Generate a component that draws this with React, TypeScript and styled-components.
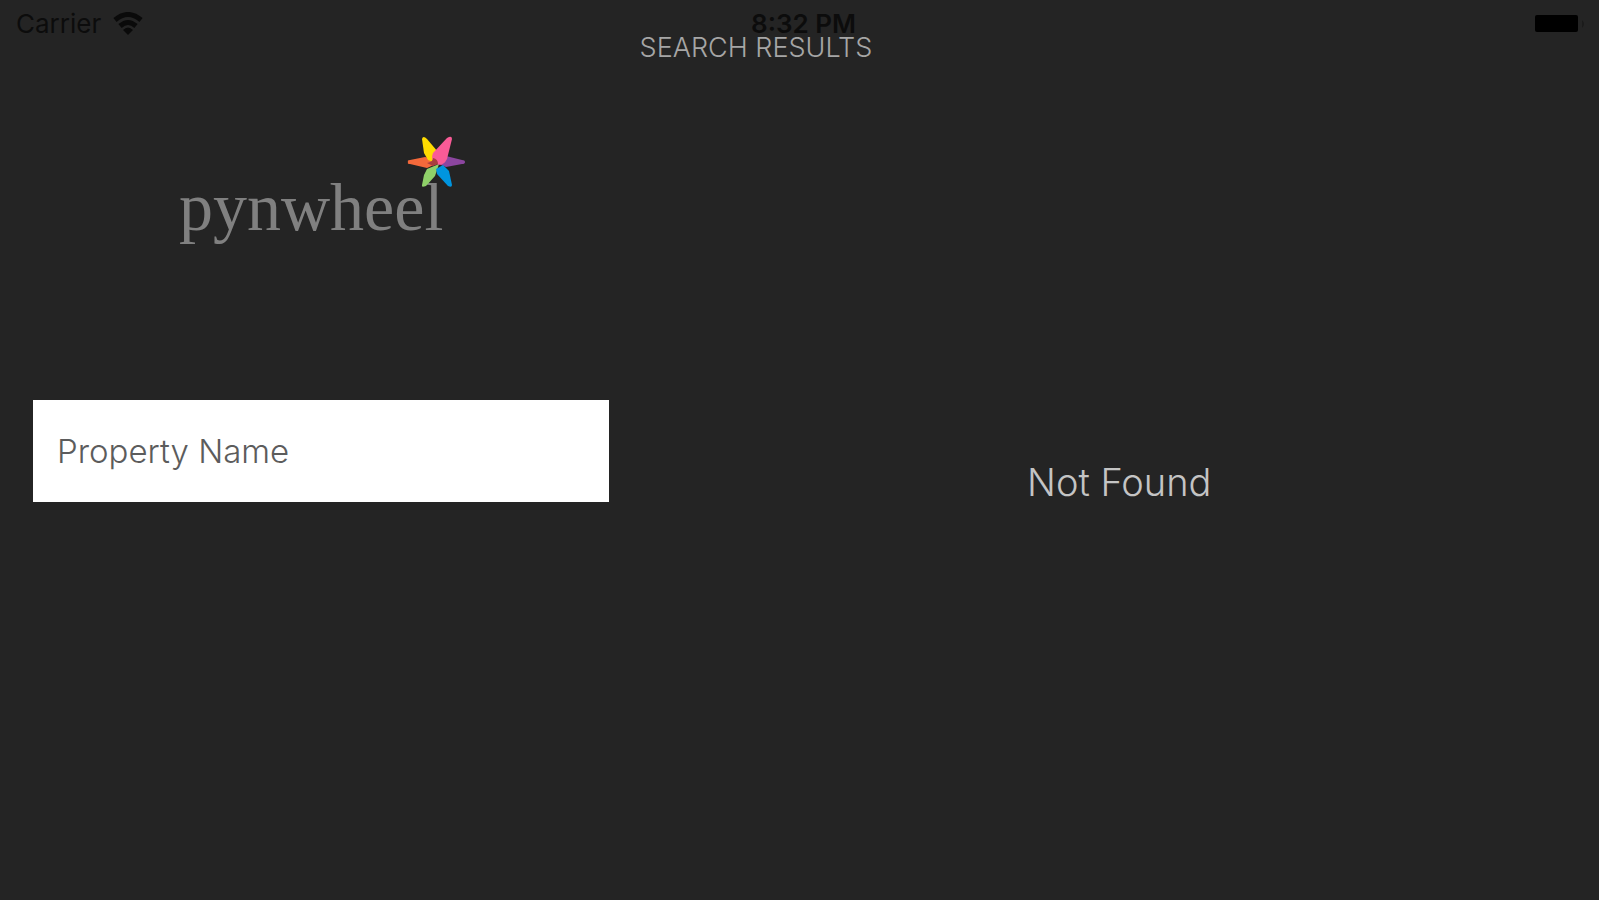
import React from "react";
import styled, { createGlobalStyle } from "styled-components";

const GlobalStyle = createGlobalStyle`
  *, *::before, *::after { box-sizing: border-box; }
  body {
    margin: 0;
    background: #242424;
    font-family: Inter, "Liberation Sans", sans-serif;
  }
`;

const Screen = styled.div`
  position: relative;
  display: grid;
  grid-template-columns: 40fr 60fr;
  min-height: 100vh;
  background: #242424;
`;

const StatusBar = styled.header`
  position: absolute;
  inset: 0 0 auto 0;
  display: grid;
  grid-template-columns: 1fr auto 1fr;
  align-items: center;
  height: 48px;
  padding: 0 8px 0 16px;
  color: #0c0c0c;
  font-size: 26px;
  line-height: 32px;
  pointer-events: none;
`;

const Carrier = styled.div`
  display: flex;
  align-items: center;
  gap: 12px;
`;

const Clock = styled.time`
  font-weight: 600;
`;

const BatterySvg = styled.svg`
  justify-self: end;
  width: 56px;
  height: 20px;
`;

const SearchPanel = styled.aside`
  display: flex;
  flex-direction: column;
  padding: 128px 31px 32px 33px;
`;

const LogoArea = styled.div`
  display: flex;
  justify-content: center;
  height: 272px;
`;

const LogoSvg = styled.svg`
  display: block;
  width: 288px;
  height: 128px;
  overflow: visible;
`;

const LogoText = styled.text`
  fill: #808080;
  font-family: "Liberation Serif", serif;
  font-size: 68px;
`;

const SearchInput = styled.input`
  width: 100%;
  height: 102px;
  padding: 0 24px;
  border: 0;
  border-radius: 0;
  background: #fff;
  color: #4a4a4a;
  font-family: inherit;
  font-size: 33px;
  font-weight: 300;
  &::placeholder { color: #5c5c5c; opacity: 1; }
  &:focus { outline: none; }
`;

const ResultsPanel = styled.main`
  display: flex;
  flex-direction: column;
`;

const Title = styled.h1`
  margin: 32px 0 0;
  color: #a6a6a6;
  font-size: 27px;
  line-height: 32px;
  font-weight: 300;
`;

const Results = styled.section`
  display: flex;
  flex: 1;
  align-items: center;
  justify-content: center;
`;

const EmptyMessage = styled.p`
  margin: 0;
  color: #c4c4c4;
  font-size: 38px;
  line-height: 40px;
  font-weight: 300;
`;

function WifiIcon() {
  return (
    <svg width="30" height="24" viewBox="0 0 30 24" aria-hidden="true">
      <g fill="none" stroke="#0a0a0a" strokeWidth="5">
        <path d="M2 8Q15-3 28 8" />
        <path d="M7 14Q15 7 23 14" />
      </g>
      <path d="M10 18Q15 13 20 18L15 23Z" fill="#0a0a0a" />
    </svg>
  );
}

function BatteryIcon() {
  return (
    <BatterySvg viewBox="0 0 56 20" role="img" aria-label="Battery full">
      <rect x="0" y="1" width="43" height="17" rx="2" fill="#000" />
      <path d="M47 6Q51 10 47 14Z" fill="#1b1b1b" />
    </BatterySvg>
  );
}

function Logo() {
  return (
    <LogoSvg viewBox="0 0 288 128" role="img" aria-label="pynwheel">
      <LogoText x="2" y="102">pynwheel</LogoText>
      <path d="M231 34Q230 32 233 32L248 29L257 31L259 36L250 40L233 36Q230 36 231 34Z" fill="#f4693b" />
      <path d="M245 11Q246 7 250 11L261 24L259 35L251 32L247 25Z" fill="#ffdc00" />
      <path d="M288 34Q288 32 285 32L269 28L259 35L269 39L285 36Q288 36 288 34Z" fill="#8c46a0" />
      <path d="M245 57Q244 60 249 58L258 48L262 36L250 41L247 47Z" fill="#8fd069" />
      <path d="M275 57Q275 60 271 58L260 46L259 41L266 37L272 43Z" fill="#0095df" />
      <path d="M275 11Q275 7 270 10L256 25Q253 32 259 36Q266 39 270 31Z" fill="#fa5b97" />
      <path d="M256 30Q261 31 261 36L256 38L250 35Q256 34 256 30Z" fill="#a93e3e" />
    </LogoSvg>
  );
}

export default function App() {
  return (
    <>
      <GlobalStyle />
      <Screen>
        <SearchPanel>
          <LogoArea>
            <Logo />
          </LogoArea>
          <SearchInput type="text" aria-label="Property Name" placeholder="Property Name" />
        </SearchPanel>
        <ResultsPanel>
          <Title>SEARCH RESULTS</Title>
          <Results>
            <EmptyMessage>Not Found</EmptyMessage>
          </Results>
        </ResultsPanel>
        <StatusBar>
          <Carrier>
            <span>Carrier</span>
            <WifiIcon />
          </Carrier>
          <Clock>8:32 PM</Clock>
          <BatteryIcon />
        </StatusBar>
      </Screen>
    </>
  );
}
